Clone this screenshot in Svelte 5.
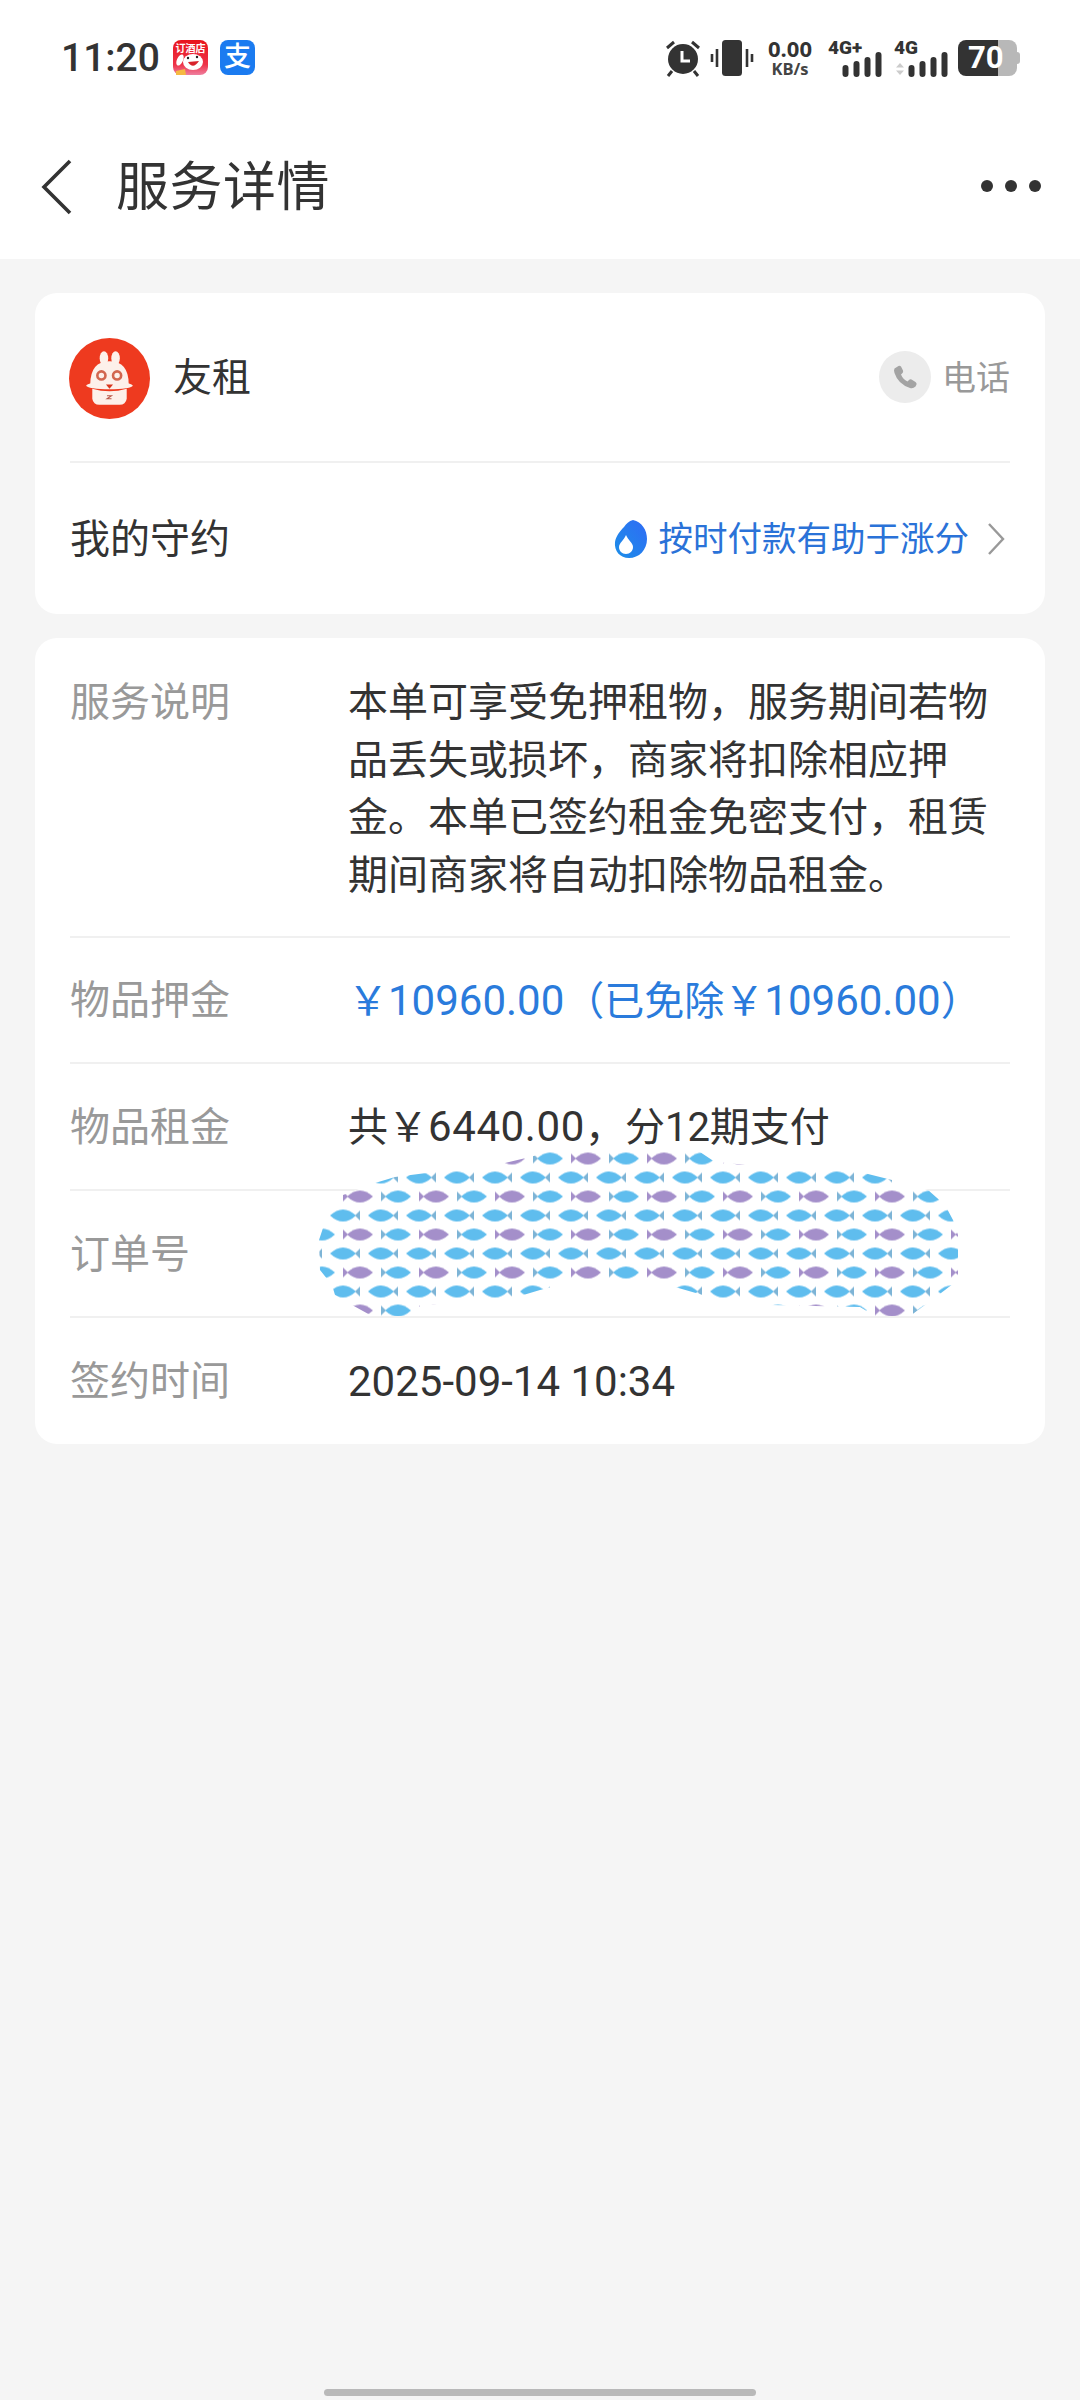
<script lang="ts">
	type Part = { text: string; num?: boolean };

	const rows: { label: string; parts: Part[]; blue?: boolean; wide?: boolean }[] = [
		{
			label: '物品押金',
			blue: true,
			parts: [
				{ text: '￥' },
				{ text: '10960.00', num: true },
				{ text: '（已免除￥' },
				{ text: '10960.00', num: true },
				{ text: '）' }
			]
		},
		{
			label: '物品租金',
			wide: true,
			parts: [
				{ text: '共￥' },
				{ text: '6440.00', num: true },
				{ text: '，分12期支付' }
			]
		},
		{ label: '订单号', parts: [] },
		{ label: '签约时间', parts: [{ text: '2025-09-14 10:34', num: true }] }
	];

	// scribble over the order number, in page coordinates
	const blob =
		'M548 1152 L700 1152 L715 1162 L780 1168 L860 1172 L900 1182 L928 1190 L945 1205 L953 1220 L958 1235 L958 1280 L945 1290 L925 1305 L910 1316 L875 1316 L860 1307 L770 1305 L720 1300 L675 1287 L640 1284 L560 1285 L540 1290 L520 1296 L445 1303 L420 1306 L410 1316 L372 1316 L352 1305 L335 1295 L332 1285 L320 1270 L319 1240 L323 1228 L328 1215 L343 1195 L375 1183 L395 1177 L505 1163 L530 1157 Z';
</script>

<div class="page">
	<header class="top">
		<div class="status">
			<div class="status-left">
				<span class="time">11:20</span>
				<svg class="app" viewBox="0 0 35 35" aria-hidden="true">
					<defs>
						<linearGradient id="appred" x1="0" y1="0" x2="0" y2="1">
							<stop offset="0" stop-color="#e8141c" />
							<stop offset="0.7" stop-color="#ee3348" />
							<stop offset="1" stop-color="#ef7fa0" />
						</linearGradient>
					</defs>
					<rect width="35" height="35" rx="8" fill="url(#appred)" />
					<text x="17.5" y="12" class="app-text">订酒店</text>
					<ellipse cx="20" cy="22" rx="10" ry="8" fill="#fff" />
					<ellipse cx="7" cy="20" rx="3" ry="6" fill="#fff" transform="rotate(25 7 20)" />
					<path d="M15 22 Q20 30 26 21 Z" fill="#d8232c" />
					<circle cx="15" cy="18" r="1.2" fill="#222" />
					<circle cx="24" cy="17" r="1.2" fill="#222" />
					<path d="M3 35 L3 31 L12 29 L13 35 Z" fill="#f5b942" />
				</svg>
				<span class="alipay">支</span>
			</div>
			<div class="status-right">
				<svg class="alarm" width="38" height="38" viewBox="0 0 36 38" aria-hidden="true">
					<circle cx="18" cy="20" r="15" fill="#333" />
					<path d="M17 12 V22 H25" fill="none" stroke="#fff" stroke-width="3" />
					<path d="M2 9 L9 3 M34 9 L27 3 M7 32 L3 37 M29 32 L33 37" stroke="#333" stroke-width="3" />
				</svg>
				<svg width="44" height="38" viewBox="0 0 42 38" aria-hidden="true">
					<rect x="11" y="1" width="20" height="36" rx="3.5" fill="#333" />
					<path d="M1 15 V23 M6 10 V28 M36 10 V28 M41 15 V23" stroke="#333" stroke-width="2.6" />
				</svg>
				<div class="speed"><b>0.00</b><span>KB/s</span></div>
				<div class="net">
					<span class="net-label">4G+</span>
					<svg class="bars" width="40" height="25" viewBox="0 0 40 25" aria-hidden="true">
						<path d="M3.5 22 V16 M14.5 22 V12 M25.5 22 V8 M36.5 22 V3" stroke="#333" stroke-width="6" stroke-linecap="round" />
					</svg>
				</div>
				<div class="net">
					<span class="net-label">4G</span>
					<svg class="updown" width="10" height="12" viewBox="0 0 10 12" aria-hidden="true">
						<path d="M5 0 L9 4.5 H1 Z M5 12 L9 7.5 H1 Z" fill="#ccc" />
					</svg>
					<svg class="bars" width="40" height="25" viewBox="0 0 40 25" aria-hidden="true">
						<path d="M3.5 22 V16 M14.5 22 V12 M25.5 22 V8 M36.5 22 V3" stroke="#333" stroke-width="6" stroke-linecap="round" />
					</svg>
				</div>
				<div class="battery"><span>70</span></div>
			</div>
		</div>
		<nav class="nav">
			<svg class="back" width="34" height="56" viewBox="0 0 34 56" aria-hidden="true">
				<path d="M30 2 L4 28 L30 54" fill="none" stroke="#333" stroke-width="3.6" />
			</svg>
			<h1>服务详情</h1>
			<div class="dots"><i></i><i></i><i></i></div>
		</nav>
	</header>

	<main class="main">
		<section class="card">
			<div class="shop">
				<svg class="logo" viewBox="0 0 80 80" aria-hidden="true">
					<circle cx="40" cy="40" r="40" fill="#ee3a1f" />
					<ellipse cx="34.5" cy="20" rx="4.2" ry="7" fill="#fdf0ea" />
					<ellipse cx="46" cy="20" rx="4.2" ry="7" fill="#fdf0ea" />
					<path d="M21 46 Q21 23 40 23 Q59 23 59 46 Z" fill="#fdf0ea" />
					<ellipse cx="40" cy="47" rx="23" ry="3.6" fill="#fdf0ea" />
					<path d="M23 50 Q40 55 57 50 L57 60 Q56 66 50 66 L30 66 Q24 66 23 60 Z" fill="#fdf0ea" />
					<circle cx="32" cy="37" r="4" fill="#fdf0ea" stroke="#d2664f" stroke-width="2.6" />
					<circle cx="47.5" cy="37" r="4" fill="#fdf0ea" stroke="#d2664f" stroke-width="2.6" />
					<path d="M36.5 46 H43.5 L40 50 Z" fill="#d8351c" />
					<path d="M37.5 57 H42 L37.5 60 H42" fill="none" stroke="#b9584a" stroke-width="1" />
				</svg>
				<span class="shop-name">友租</span>
				<div class="call">
					<span class="call-icon">
						<svg width="28" height="28" viewBox="0 0 28 28" aria-hidden="true">
							<path d="M7.5 3 L3.5 5.5 Q2.5 7 3.5 10 Q7 21 19 25 Q22 26 24.5 23.5 L25.5 21.5 Q26 20 24.5 19 L20.5 16.5 Q19 16 18 17 L16.5 18.5 Q12 16.5 10 11.5 L11.5 10 Q12.5 9 12 7.5 L10 3.5 Q9 2.5 7.5 3 Z" fill="#a3a3a3" />
						</svg>
					</span>
					<span class="call-text">电话</span>
				</div>
			</div>
			<div class="promise">
				<span class="promise-title">我的守约</span>
				<div class="promise-link">
					<svg width="34" height="40" viewBox="0 0 34 40" aria-hidden="true">
						<defs>
							<linearGradient id="drop" x1="1" y1="0" x2="0" y2="1">
								<stop offset="0" stop-color="#2f6bf5" />
								<stop offset="1" stop-color="#1c8fe8" />
							</linearGradient>
						</defs>
						<path d="M19 1 C28 3 33 11 33 20 C33 31 25 39 15 39 C6 39 0 32 1 23 C2 17 6 12 10 8 C12 5 15 2 19 1 Z" fill="url(#drop)" />
						<path d="M12 16 C14 21 19 24 19 28 C19 32 16 35 12 35 C8 35 5 32 5 28 C5 24 10 21 12 16 Z" fill="#fff" />
					</svg>
					<span>按时付款有助于涨分</span>
					<svg class="chev" width="18" height="34" viewBox="0 0 18 34" aria-hidden="true">
						<path d="M2 2 L16 17 L2 32" fill="none" stroke="#999" stroke-width="2.4" />
					</svg>
				</div>
			</div>
		</section>

		<section class="card details">
			<div class="row row-desc">
				<span class="label">服务说明</span>
				<p class="value">本单可享受免押租物，服务期间若物品丢失或损坏，商家将扣除相应押金。本单已签约租金免密支付，租赁期间商家将自动扣除物品租金。</p>
			</div>
			{#each rows as row}
				<div class="row">
					<span class="label">{row.label}</span>
					<span class="value" class:blue={row.blue} class:wide={row.wide}>
						{#each row.parts as part}{#if part.num}<span class="num">{part.text}</span>{:else}{part.text}{/if}{/each}
					</span>
				</div>
			{/each}

			<svg class="scribble" width="680" height="190" viewBox="300 1140 680 190" aria-hidden="true">
				<defs>
					<path id="fish-body" d="M-13 0 Q0 -12 13 0 Q0 12 -13 0 Z" />
					<pattern id="fish" patternUnits="userSpaceOnUse" x="0" y="1139.5" width="76" height="38">
						<!-- tail right rows, every 38px -->
						<g fill="#5fbdee">
							<use href="#fish-body" x="1" y="0" />
							<use href="#fish-body" x="39" y="0" />
							<use href="#fish-body" x="77" y="0" />
							<use href="#fish-body" x="1" y="38" />
							<use href="#fish-body" x="39" y="38" />
							<use href="#fish-body" x="77" y="38" />
						</g>
						<path d="M13 0 L18 -5 V5 Z M51 0 L56 -5 V5 Z M13 38 L18 33 V43 Z M51 38 L56 33 V43 Z" fill="#7db4d6" />
						<!-- tail left rows, purple and blue in turn -->
						<use href="#fish-body" x="56" y="19" fill="#a48fca" />
						<use href="#fish-body" x="18" y="19" fill="#5fbdee" />
						<path d="M44 19 L39 14 V24 Z" fill="#a48fca" />
						<path d="M6 19 L1 14 V24 Z" fill="#7db4d6" />
					</pattern>
				</defs>
				<path d={blob} fill="#fff" />
				<path d={blob} fill="url(#fish)" />
			</svg>
		</section>
	</main>

	<div class="home-bar"></div>
</div>

<style>
	:global(body) {
		margin: 0;
		background: #f5f5f5;
	}

	.page {
		position: relative;
		height: 2400px;
		overflow: hidden;
		background: #f5f5f5;
		color: #333;
		font-family: Roboto, 'Noto Sans CJK SC', sans-serif;
	}

	.top {
		background: #fff;
		height: 259px;
	}

	.status {
		height: 115px;
		display: flex;
		align-items: center;
		justify-content: space-between;
		padding: 0 63px 0 61px;
	}

	.status-left {
		display: flex;
		align-items: center;
	}

	.time {
		font-size: 39px;
		font-weight: 500;
		width: 112px;
	}

	.app {
		width: 35px;
		height: 35px;
		margin-right: 12px;
	}

	.app-text {
		font-size: 10px;
		font-weight: 700;
		fill: #fff;
		text-anchor: middle;
	}

	.alipay {
		width: 35px;
		height: 35px;
		border-radius: 8px;
		background: #1b7bf0;
		color: #fff;
		font-size: 27px;
		font-weight: 500;
		line-height: 35px;
		text-align: center;
	}

	.status-right {
		display: flex;
		align-items: center;
		gap: 10px;
	}

	.alarm {
		margin-right: -2px;
	}

	.speed {
		display: flex;
		flex-direction: column;
		align-items: center;
		gap: 2px;
		width: 52px;
		font-family: 'Open Sans', sans-serif;
		font-weight: 700;
		line-height: 1;
	}

	.speed b {
		font-size: 22px;
		font-weight: 700;
		color: #333;
	}

	.speed span {
		font-size: 16.5px;
		color: #444;
	}

	.net {
		position: relative;
		width: 56px;
		height: 38px;
	}

	.net-label {
		position: absolute;
		left: 2px;
		top: 0;
		font-size: 19px;
		font-weight: 900;
		line-height: 18px;
	}

	.bars {
		position: absolute;
		right: 0;
		bottom: 0;
	}

	.updown {
		position: absolute;
		left: 3px;
		bottom: 2px;
	}

	.battery {
		position: relative;
		width: 59px;
		height: 36px;
		border-radius: 8px;
		background: linear-gradient(90deg, #333 0 68%, #b8b8b8 68% 100%);
		color: #fff;
		font-size: 31px;
		font-weight: 700;
		line-height: 36px;
		text-indent: 10px;
	}

	.battery::after {
		content: '';
		position: absolute;
		right: -3px;
		top: 12px;
		width: 3px;
		height: 12px;
		border-radius: 0 3px 3px 0;
		background: #b8b8b8;
	}

	.nav {
		height: 144px;
		display: flex;
		align-items: center;
		padding: 0 39px 0 40px;
	}

	.back {
		margin-right: 42px;
	}

	h1 {
		flex: 1;
		margin: 2px 0 0;
		font-size: 53px;
		font-weight: 400;
		line-height: 60px;
		letter-spacing: 0.5px;
	}

	.dots {
		display: flex;
		gap: 12px;
		margin-top: -2px;
	}

	.dots i {
		width: 12px;
		height: 12px;
		border-radius: 50%;
		background: #333;
	}

	.main {
		display: flex;
		flex-direction: column;
		gap: 24px;
		padding: 34px 35px 0;
	}

	.card {
		position: relative;
		background: #fff;
		border-radius: 22px;
		padding: 0 35px;
	}

	.shop {
		height: 170px;
		display: flex;
		align-items: center;
		border-bottom: 2px solid #f0f0f0;
		box-sizing: border-box;
		line-height: 50px;
	}

	.logo {
		width: 81px;
		height: 81px;
		margin: 2px 23px 0 -1px;
	}

	.shop-name {
		flex: 1;
		margin-top: 2px;
		font-size: 39px;
	}

	.call {
		display: flex;
		align-items: center;
		gap: 11px;
		font-size: 34px;
		color: #999;
	}

	.call-text {
		margin-top: 2px;
	}

	.call-icon {
		width: 52px;
		height: 52px;
		border-radius: 50%;
		background: #ececec;
		display: flex;
		align-items: center;
		justify-content: center;
	}

	.promise {
		height: 151px;
		display: flex;
		align-items: center;
		justify-content: space-between;
		font-size: 40px;
		line-height: 50px;
	}

	.promise-title {
		margin-top: 2px;
	}

	.promise-link {
		display: flex;
		align-items: center;
		gap: 11px;
		font-size: 34.5px;
		color: #2a72d8;
	}

	.chev {
		margin-left: 7px;
		margin-right: 5px;
	}

	.row {
		display: grid;
		grid-template-columns: 278px 1fr;
		align-items: center;
		height: 127px;
		padding-top: 2px;
		box-sizing: border-box;
		border-top: 2px solid #f0f0f0;
		font-size: 40px;
		line-height: 50px;
	}

	.row:nth-child(2) {
		height: 126px;
	}

	.row:nth-child(5) {
		height: 128px;
	}

	.row-desc {
		height: 298px;
		align-items: start;
		padding: 36px 0 32px;
		border-top: 0;
		line-height: 57.5px;
	}

	.label {
		font-size: 40px;
		color: #999;
	}

	.value {
		margin: 0;
		font-size: 40px;
		color: #333;
	}

	.num {
		font-size: 42px;
	}

	.wide .num {
		letter-spacing: 0.6px;
	}

	.blue {
		color: #2a7bdc;
	}

	.scribble {
		position: absolute;
		left: 265px;
		top: 502px;
	}

	.home-bar {
		position: absolute;
		left: 324px;
		bottom: 4px;
		width: 432px;
		height: 7px;
		border-radius: 4px;
		background: #b9b9b9;
	}
</style>
